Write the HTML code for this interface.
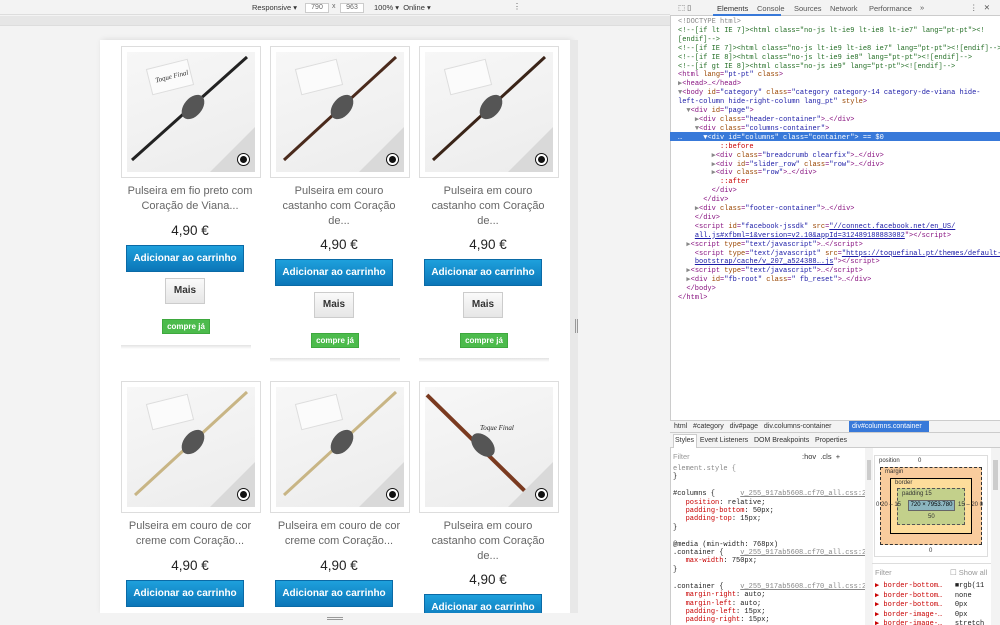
<!DOCTYPE html>
<html><head><meta charset="utf-8"><style>
*{margin:0;padding:0;box-sizing:border-box}
html,body{width:1000px;height:625px;overflow:hidden}
body{background:#f3f3f3;font-family:"Liberation Sans",sans-serif;position:relative}
.a{position:absolute}
.card{position:absolute;width:140px;height:132px;border:1px solid #ddd;background:#fff}
.img{position:absolute;left:5px;top:5px;width:128px;height:120px;background:linear-gradient(160deg,#f7f7f7,#ececec);overflow:hidden}
.tri{position:absolute;right:0;bottom:0;width:0;height:0;border-left:45px solid transparent;border-bottom:45px solid #d9d9d9}
.ic{position:absolute;right:6px;bottom:7px;width:11px;height:11px;border-radius:50%;background:#111;border:2px solid #fff;box-shadow:0 0 0 1px #111}
.t{position:absolute;width:140px;text-align:center;font-size:11px;line-height:15px;color:#666}
.p{position:absolute;width:140px;text-align:center;font-size:13.5px;color:#222}
.btn{position:absolute;width:118px;height:27px;background:linear-gradient(#1ea0dc,#0b76b8);border:1px solid #0a6aa6;color:#fff;font-weight:bold;font-size:10px;text-align:center;line-height:25px}
.m{position:absolute;width:40px;height:26px;background:linear-gradient(#fafafa,#e6e6e6);border:1px solid #ccc;font-size:10px;font-weight:bold;color:#333;text-align:center;line-height:24px}
.g{position:absolute;width:48px;height:15px;background:#4cbb4c;border:1px solid #3ea83e;color:#fff;font-size:8px;font-weight:bold;text-align:center;line-height:13px}
.sh{position:absolute;width:130px;height:4px;background:linear-gradient(#e2e2e2,#fff)}
.dl{position:absolute;left:678px;font-family:"Liberation Mono",monospace;font-size:7px;white-space:pre;line-height:8.9px;color:#881280}
.c{color:#236e25}.at{color:#994500}.v{color:#1a1aa6}.gr{color:#888}.u{color:#1a1aa6;text-decoration:underline}
.dt{font-size:7.5px;color:#333;position:absolute;white-space:nowrap}
.cs{position:absolute;font-family:"Liberation Mono",monospace;font-size:7px;white-space:pre;line-height:8.4px;color:#222}
.r{color:#c80000}
</style></head><body>
<div class="a" style="left:0;top:0;width:670px;height:15px;background:#f3f3f3;border-bottom:1px solid #ddd"></div>
<div class="a" style="left:252px;top:3px;font-size:7.5px;color:#333">Responsive ▾</div>
<div class="a" style="left:305px;top:3px;width:24px;height:10px;border:1px solid #ccc;background:#fff;font-size:7px;color:#666;text-align:center;line-height:8px">790</div>
<div class="a" style="left:332px;top:3px;font-size:7px;color:#666">x</div>
<div class="a" style="left:340px;top:3px;width:24px;height:10px;border:1px solid #ccc;background:#fff;font-size:7px;color:#666;text-align:center;line-height:8px">963</div>
<div class="a" style="left:374px;top:3px;font-size:7.5px;color:#333">100% ▾ &nbsp;Online ▾</div>
<div class="a" style="left:513px;top:2px;font-size:8px;color:#555">⋮</div>
<div class="a" style="left:0;top:16px;width:670px;height:10px;background:#e6e6e6;border-bottom:1px solid #ddd"></div>
<div class="a" style="left:100px;top:40px;width:470px;height:573px;background:#fff;box-shadow:2px 0 6px rgba(0,0,0,.12)"></div>
<div class="a" style="left:570px;top:40px;width:8px;height:573px;background:#e8e8e8"></div>
<div class="a" style="left:575px;top:319px;width:3px;height:14px;border-left:1px solid #999;border-right:1px solid #999"></div>

<div class="card" style="left:121px;top:46px"><div class="img"><svg width="128" height="120"><rect x="22" y="12" width="42" height="26" fill="#fbfbfb" transform="rotate(-14 43 25)" stroke="#ddd"/><text x="28" y="27" font-size="7" font-style="italic" fill="#333" transform="rotate(-14 43 25)" font-family="Liberation Serif">Toque Final</text><path d="M5 108 L120 5" stroke="#222" stroke-width="3"/><ellipse cx="66" cy="55" rx="9" ry="14" fill="#555" transform="rotate(40 66 55)"/></svg><div class="tri"></div><div class="ic"></div></div></div>
<div class="card" style="left:270px;top:46px"><div class="img"><svg width="128" height="120"><rect x="22" y="12" width="42" height="26" fill="#fbfbfb" transform="rotate(-14 43 25)" stroke="#ddd"/><path d="M8 108 L120 5" stroke="#4a2a1c" stroke-width="3"/><ellipse cx="66" cy="55" rx="9" ry="14" fill="#555" transform="rotate(40 66 55)"/></svg><div class="tri"></div><div class="ic"></div></div></div>
<div class="card" style="left:419px;top:46px"><div class="img"><svg width="128" height="120"><rect x="22" y="12" width="42" height="26" fill="#fbfbfb" transform="rotate(-14 43 25)" stroke="#ddd"/><path d="M8 108 L120 5" stroke="#3a2418" stroke-width="3"/><ellipse cx="66" cy="55" rx="9" ry="14" fill="#555" transform="rotate(40 66 55)"/></svg><div class="tri"></div><div class="ic"></div></div></div>

<div class="t" style="left:120px;top:184px">Pulseira em fio preto com<br>Coração de Viana...</div>
<div class="p" style="left:120px;top:223px">4,90 €</div>
<div class="btn" style="left:126px;top:245px">Adicionar ao carrinho</div>
<div class="m" style="left:165px;top:278px">Mais</div>
<div class="g" style="left:162px;top:319px">compre já</div>
<div class="sh" style="left:121px;top:345px"></div>

<div class="t" style="left:269px;top:184px">Pulseira em couro<br>castanho com Coração<br>de...</div>
<div class="p" style="left:269px;top:237px">4,90 €</div>
<div class="btn" style="left:275px;top:259px">Adicionar ao carrinho</div>
<div class="m" style="left:314px;top:292px">Mais</div>
<div class="g" style="left:311px;top:333px">compre já</div>
<div class="sh" style="left:270px;top:358px"></div>

<div class="t" style="left:418px;top:184px">Pulseira em couro<br>castanho com Coração<br>de...</div>
<div class="p" style="left:418px;top:237px">4,90 €</div>
<div class="btn" style="left:424px;top:259px">Adicionar ao carrinho</div>
<div class="m" style="left:463px;top:292px">Mais</div>
<div class="g" style="left:460px;top:333px">compre já</div>
<div class="sh" style="left:419px;top:358px"></div>

<div class="card" style="left:121px;top:381px"><div class="img"><svg width="128" height="120"><rect x="22" y="12" width="42" height="26" fill="#fbfbfb" transform="rotate(-14 43 25)" stroke="#ddd"/><path d="M8 108 L120 5" stroke="#c8b585" stroke-width="3"/><ellipse cx="66" cy="55" rx="9" ry="14" fill="#555" transform="rotate(40 66 55)"/></svg><div class="tri"></div><div class="ic"></div></div></div>
<div class="card" style="left:270px;top:381px"><div class="img"><svg width="128" height="120"><rect x="22" y="12" width="42" height="26" fill="#fbfbfb" transform="rotate(-14 43 25)" stroke="#ddd"/><path d="M8 108 L120 5" stroke="#c8b585" stroke-width="3"/><ellipse cx="66" cy="55" rx="9" ry="14" fill="#555" transform="rotate(40 66 55)"/></svg><div class="tri"></div><div class="ic"></div></div></div>
<div class="card" style="left:419px;top:381px"><div class="img"><svg width="128" height="120"><text x="55" y="43" font-size="7" font-style="italic" fill="#222" font-family="Liberation Serif">Toque Final</text><path d="M2 8 L108 112" stroke="#7a3a20" stroke-width="4"/><ellipse cx="58" cy="58" rx="9" ry="14" fill="#555" transform="rotate(-45 58 58)"/></svg><div class="tri"></div><div class="ic"></div></div></div>

<div class="t" style="left:120px;top:519px">Pulseira em couro de cor<br>creme com Coração...</div>
<div class="p" style="left:120px;top:558px">4,90 €</div>
<div class="btn" style="left:126px;top:580px">Adicionar ao carrinho</div>
<div class="t" style="left:269px;top:519px">Pulseira em couro de cor<br>creme com Coração...</div>
<div class="p" style="left:269px;top:558px">4,90 €</div>
<div class="btn" style="left:275px;top:580px">Adicionar ao carrinho</div>
<div class="t" style="left:418px;top:519px">Pulseira em couro<br>castanho com Coração<br>de...</div>
<div class="p" style="left:418px;top:572px">4,90 €</div>
<div class="btn" style="left:424px;top:594px">Adicionar ao carrinho</div>
<div class="a" style="left:0;top:613px;width:670px;height:12px;background:#f3f3f3"></div>
<div class="a" style="left:327px;top:617px;width:16px;height:3px;border-top:1px solid #999;border-bottom:1px solid #999"></div>

<div class="a" style="left:670px;top:0;width:330px;height:625px;background:#fff;border-left:1px solid #ccc;overflow:hidden"></div>
<div class="a" style="left:670px;top:0;width:330px;height:16px;background:#f3f3f3;border-bottom:1px solid #ccc"></div>
<div class="a" style="left:713px;top:0;width:68px;height:16px;border-bottom:2px solid #3879d9"></div>
<div class="dt" style="left:678px;top:3px;color:#555">⬚ ▯</div>
<div class="dt" style="left:717px;top:4px">Elements</div>
<div class="dt" style="left:757px;top:4px;color:#555">Console</div>
<div class="dt" style="left:794px;top:4px;color:#555">Sources</div>
<div class="dt" style="left:830px;top:4px;color:#555">Network</div>
<div class="dt" style="left:869px;top:4px;color:#555">Performance</div>
<div class="dt" style="left:920px;top:3px;color:#555">»</div>
<div class="dt" style="left:970px;top:3px;color:#555">⋮ &nbsp;&nbsp;✕</div>

<div class="a" style="left:670px;top:132px;width:330px;height:9px;background:#3879d9"></div>
<div class="a" style="left:670px;top:0;width:330px;height:420px;overflow:hidden">
<div class="dl" style="top:18px;left:8px"><span class="gr">&lt;!DOCTYPE html&gt;</span>
<span class="c">&lt;!--[if lt IE 7]&gt;&lt;html class="no-js lt-ie9 lt-ie8 lt-ie7" lang="pt-pt"&gt;&lt;!</span>
<span class="c">[endif]--&gt;</span>
<span class="c">&lt;!--[if IE 7]&gt;&lt;html class="no-js lt-ie9 lt-ie8 ie7" lang="pt-pt"&gt;&lt;![endif]--&gt;</span>
<span class="c">&lt;!--[if IE 8]&gt;&lt;html class="no-js lt-ie9 ie8" lang="pt-pt"&gt;&lt;![endif]--&gt;</span>
<span class="c">&lt;!--[if gt IE 8]&gt;&lt;html class="no-js ie9" lang="pt-pt"&gt;&lt;![endif]--&gt;</span>
&lt;html <span class="at">lang</span>=<span class="v">"pt-pt"</span> <span class="at">class</span>&gt;
<span class="gr">▶</span>&lt;head&gt;…&lt;/head&gt;
<span class="gr">▼</span>&lt;body <span class="at">id</span>=<span class="v">"category"</span> <span class="at">class</span>=<span class="v">"category category-14 category-de-viana hide-</span>
<span class="v">left-column hide-right-column lang_pt"</span> <span class="at">style</span>&gt;
  <span class="gr">▼</span>&lt;div <span class="at">id</span>=<span class="v">"page"</span>&gt;
    <span class="gr">▶</span>&lt;div <span class="at">class</span>=<span class="v">"header-container"</span>&gt;…&lt;/div&gt;
    <span class="gr">▼</span>&lt;div <span class="at">class</span>=<span class="v">"columns-container"</span>&gt;
<span style="color:#fff">…     ▼&lt;div id="columns" class="container"&gt; == $0</span>
          <span class="r">::before</span>
        <span class="gr">▶</span>&lt;div <span class="at">class</span>=<span class="v">"breadcrumb clearfix"</span>&gt;…&lt;/div&gt;
        <span class="gr">▶</span>&lt;div <span class="at">id</span>=<span class="v">"slider_row"</span> <span class="at">class</span>=<span class="v">"row"</span>&gt;…&lt;/div&gt;
        <span class="gr">▶</span>&lt;div <span class="at">class</span>=<span class="v">"row"</span>&gt;…&lt;/div&gt;
          <span class="r">::after</span>
        &lt;/div&gt;
      &lt;/div&gt;
    <span class="gr">▶</span>&lt;div <span class="at">class</span>=<span class="v">"footer-container"</span>&gt;…&lt;/div&gt;
    &lt;/div&gt;
    &lt;script <span class="at">id</span>=<span class="v">"facebook-jssdk"</span> <span class="at">src</span>=<span class="u">"//connect.facebook.net/en_US/</span>
    <span class="u">all.js#xfbml=1&amp;version=v2.10&amp;appId=312489188883082</span>"&gt;&lt;/script&gt;
  <span class="gr">▶</span>&lt;script <span class="at">type</span>=<span class="v">"text/javascript"</span>&gt;…&lt;/script&gt;
    &lt;script <span class="at">type</span>=<span class="v">"text/javascript"</span> <span class="at">src</span>=<span class="u">"https://toquefinal.pt/themes/default-</span>
    <span class="u">bootstrap/cache/v_207_a524388….js</span>"&gt;&lt;/script&gt;
  <span class="gr">▶</span>&lt;script <span class="at">type</span>=<span class="v">"text/javascript"</span>&gt;…&lt;/script&gt;
  <span class="gr">▶</span>&lt;div <span class="at">id</span>=<span class="v">"fb-root"</span> <span class="at">class</span>=<span class="v">" fb_reset"</span>&gt;…&lt;/div&gt;
  &lt;/body&gt;
&lt;/html&gt;</div></div>

<div class="a" style="left:670px;top:420px;width:330px;height:13px;background:#f3f3f3;border-top:1px solid #ccc;border-bottom:1px solid #ccc"></div>
<div class="dt" style="left:674px;top:423px;font-size:7px">html &nbsp; #category &nbsp; div#page &nbsp; div.columns-container</div>
<div class="a" style="left:849px;top:421px;width:80px;height:11px;background:#3879d9"></div>
<div class="dt" style="left:852px;top:423px;color:#fff;font-size:7px">div#columns.container</div>
<div class="a" style="left:670px;top:433px;width:330px;height:15px;background:#f3f3f3;border-bottom:1px solid #ccc"></div>
<div class="a" style="left:673px;top:434px;width:24px;height:14px;background:#fff;border:1px solid #ccc;border-bottom:none"></div>
<div class="dt" style="left:675px;top:437px;font-size:7px">Styles &nbsp; Event Listeners &nbsp; DOM Breakpoints &nbsp; Properties</div>
<div class="dt" style="left:673px;top:452px;color:#999">Filter</div>
<div class="dt" style="left:802px;top:452px">:hov &nbsp;.cls &nbsp;+</div>
<div class="a" style="left:865px;top:448px;width:8px;height:177px;background:#f3f3f3"></div>
<div class="a" style="left:867px;top:460px;width:4px;height:20px;background:#ccc"></div>
<div class="a" style="left:670px;top:460px;width:195px;height:165px;overflow:hidden">
<div class="cs" style="left:3px;top:5px"><span class="gr">element.style {</span>
}

#columns {      <span class="gr" style="text-decoration:underline">v_255_917ab5608…cf70_all.css:2</span>
   <span class="r">position</span>: relative;
   <span class="r">padding-bottom</span>: 50px;
   <span class="r">padding-top</span>: 15px;
}

@media (min-width: 768px)
.container {    <span class="gr" style="text-decoration:underline">v_255_917ab5608…cf70_all.css:2</span>
   <span class="r">max-width</span>: 750px;
}

.container {    <span class="gr" style="text-decoration:underline">v_255_917ab5608…cf70_all.css:2</span>
   <span class="r">margin-right</span>: auto;
   <span class="r">margin-left</span>: auto;
   <span class="r">padding-left</span>: 15px;
   <span class="r">padding-right</span>: 15px;
}</div></div>
<div class="a" style="left:874px;top:455px;width:114px;height:102px;border:1px solid #ddd;background:#fff"></div>
<div class="a" style="left:880px;top:467px;width:102px;height:78px;background:#f9cc9d;border:1px dashed #333"></div>
<div class="a" style="left:890px;top:478px;width:82px;height:56px;background:#fddd9b;border:1px solid #000"></div>
<div class="a" style="left:897px;top:488px;width:68px;height:37px;background:#c3d08b;border:1px dashed #555"></div>
<div class="a" style="left:908px;top:500px;width:47px;height:11px;background:#8cb6c0;border:1px solid #666;font-size:6px;text-align:center;line-height:9px">720 × 7953.780</div>
<div class="dt" style="left:879px;top:458px;font-size:6px">position &nbsp;&nbsp;&nbsp;&nbsp;&nbsp;&nbsp;&nbsp;&nbsp;&nbsp;&nbsp;0</div>
<div class="dt" style="left:885px;top:469px;font-size:6px">margin</div>
<div class="dt" style="left:895px;top:480px;font-size:6px">border</div>
<div class="dt" style="left:902px;top:491px;font-size:6px">padding 15</div>
<div class="dt" style="left:928px;top:514px;font-size:6px">50</div>
<div class="dt" style="left:876px;top:502px;font-size:6px">0 20 – 15</div>
<div class="dt" style="left:958px;top:502px;font-size:6px">15 – 20 0</div>
<div class="dt" style="left:929px;top:548px;font-size:6px">0</div>
<div class="a" style="left:872px;top:563px;width:119px;height:1px;background:#ddd"></div>
<div class="dt" style="left:875px;top:568px;color:#999">Filter</div>
<div class="dt" style="left:950px;top:568px;color:#999">☐ Show all</div>
<div class="a" style="left:873px;top:578px;width:118px;height:47px;overflow:hidden">
<div class="cs" style="left:2px;top:4px;line-height:9.5px"><span class="r">▶ border-bottom…</span>   ■rgb(11
<span class="r">▶ border-bottom…</span>   none
<span class="r">▶ border-bottom…</span>   0px
<span class="r">▶ border-image-…</span>   0px
<span class="r">▶ border-image-…</span>   stretch</div></div>
<div class="a" style="left:991px;top:448px;width:9px;height:177px;background:#f3f3f3"></div>
<div class="a" style="left:993px;top:460px;width:5px;height:30px;background:#ccc"></div>
</body></html>
